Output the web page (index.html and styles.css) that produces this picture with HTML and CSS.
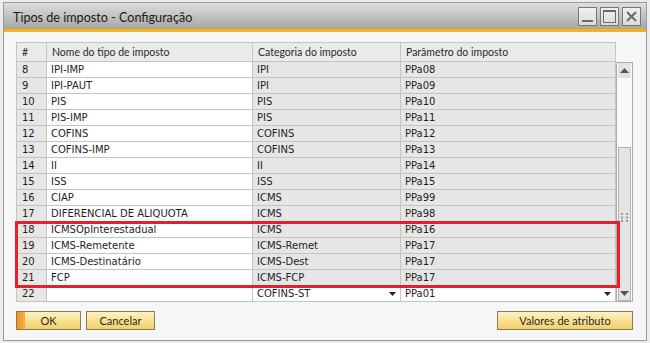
FILE: index.html
```html
<!DOCTYPE html>
<html lang="pt-BR">
<head>
  <meta charset="UTF-8">
  <title>Tipos de imposto - Configuração</title>
  <link rel="stylesheet" href="styles.css">
</head>
<body>
  <div class="window">
    <div class="titlebar">
      <span class="title">Tipos de imposto - Configuração</span>
      <div class="controls">
        <span class="ctl"><svg width="17" height="17" viewBox="0 0 17 17"><rect x="3" y="12" width="11" height="2" fill="#6a6a6a"/></svg></span>
        <span class="ctl"><svg width="17" height="17" viewBox="0 0 17 17"><rect x="2.5" y="2.5" width="12" height="12" fill="none" stroke="#6a6a6a"/><rect x="3" y="3" width="11" height="1" fill="#6a6a6a"/></svg></span>
        <span class="ctl"><svg width="17" height="17" viewBox="0 0 17 17"><path d="M4 4 L13 13 M13 4 L4 13" stroke="#6a6a6a" stroke-width="2"/></svg></span>
      </div>
    </div>

    <div class="content">
      <div class="grid">
        <div class="row head">
          <div class="cell">#</div>
          <div class="cell">Nome do tipo de imposto</div>
          <div class="cell">Categoria do imposto</div>
          <div class="cell">Parâmetro do imposto</div>
        </div>

        <div class="rows">
          <div class="row"><div class="cell num">8</div><div class="cell">IPI-IMP</div><div class="cell ro">IPI</div><div class="cell ro">PPa08</div></div>
          <div class="row"><div class="cell num">9</div><div class="cell">IPI-PAUT</div><div class="cell ro">IPI</div><div class="cell ro">PPa09</div></div>
          <div class="row"><div class="cell num">10</div><div class="cell">PIS</div><div class="cell ro">PIS</div><div class="cell ro">PPa10</div></div>
          <div class="row"><div class="cell num">11</div><div class="cell">PIS-IMP</div><div class="cell ro">PIS</div><div class="cell ro">PPa11</div></div>
          <div class="row"><div class="cell num">12</div><div class="cell">COFINS</div><div class="cell ro">COFINS</div><div class="cell ro">PPa12</div></div>
          <div class="row"><div class="cell num">13</div><div class="cell">COFINS-IMP</div><div class="cell ro">COFINS</div><div class="cell ro">PPa13</div></div>
          <div class="row"><div class="cell num">14</div><div class="cell">II</div><div class="cell ro">II</div><div class="cell ro">PPa14</div></div>
          <div class="row"><div class="cell num">15</div><div class="cell">ISS</div><div class="cell ro">ISS</div><div class="cell ro">PPa15</div></div>
          <div class="row"><div class="cell num">16</div><div class="cell">CIAP</div><div class="cell ro">ICMS</div><div class="cell ro">PPa99</div></div>
          <div class="row"><div class="cell num">17</div><div class="cell">DIFERENCIAL DE ALIQUOTA</div><div class="cell ro">ICMS</div><div class="cell ro">PPa98</div></div>
          <div class="row"><div class="cell num">18</div><div class="cell">ICMSOpInterestadual</div><div class="cell ro">ICMS</div><div class="cell ro">PPa16</div></div>
          <div class="row"><div class="cell num">19</div><div class="cell">ICMS-Remetente</div><div class="cell ro">ICMS-Remet</div><div class="cell ro">PPa17</div></div>
          <div class="row"><div class="cell num">20</div><div class="cell">ICMS-Destinatário</div><div class="cell ro">ICMS-Dest</div><div class="cell ro">PPa17</div></div>
          <div class="row"><div class="cell num">21</div><div class="cell">FCP</div><div class="cell ro">ICMS-FCP</div><div class="cell ro">PPa17</div></div>
          <div class="row">
            <div class="cell num">22</div>
            <div class="cell"></div>
            <div class="cell combo">COFINS-ST<svg width="7" height="4" viewBox="0 0 7 4"><path d="M0 0 H7 L3.5 4 Z" fill="#222"/></svg></div>
            <div class="cell combo">PPa01<svg width="7" height="4" viewBox="0 0 7 4"><path d="M0 0 H7 L3.5 4 Z" fill="#222"/></svg></div>
          </div>
          <div class="highlight"></div>
        </div>

        <div class="scrollbar">
          <div class="sb-btn"><svg width="9" height="5" viewBox="0 0 9 5"><path d="M0 5 H9 L4.5 0 Z" fill="#555"/></svg></div>
          <div class="sb-track"></div>
          <div class="sb-thumb">
            <div class="sb-grip">
              <svg width="7" height="9" viewBox="0 0 7 9" fill="#9a9a9a"><rect x="0" y="0" width="2" height="2"/><rect x="5" y="0" width="2" height="2"/><rect x="0" y="3.5" width="2" height="2"/><rect x="5" y="3.5" width="2" height="2"/><rect x="0" y="7" width="2" height="2"/><rect x="5" y="7" width="2" height="2"/></svg>
            </div>
            <div class="sb-down"><svg width="9" height="5" viewBox="0 0 9 5"><path d="M0 0 H9 L4.5 5 Z" fill="#555"/></svg></div>
          </div>
        </div>
      </div>

      <div class="actions">
        <button class="button default">OK</button>
        <button class="button">Cancelar</button>
        <span class="spacer"></span>
        <button class="button wide">Valores de atributo</button>
      </div>
    </div>
  </div>
</body>
</html>
```

FILE: styles.css
```css
html, body {
  margin: 0;
  padding: 0;
}

body {
  background-color: #ececec;
  padding: 2px 3px 2px 3px;
  font-family: 'DejaVu Sans', sans-serif;
  color: #1e1e1e;
}

.window {
  border: 1px solid #9a9a9a;
  background-color: #f6f6f6;
}

.titlebar {
  height: 26px;
  display: flex;
  align-items: center;
  justify-content: space-between;
  padding: 0 5px 0 9px;
  background: linear-gradient(#dedede, #a6a6a6);
  border-bottom: 3px solid #f6b40c;
}

.title {
  font-family: Lato, sans-serif;
  font-size: 12.6px;
  color: #1a1a1a;
  padding-top: 2px;
}

.controls {
  display: flex;
  gap: 3px;
}

.ctl {
  width: 17px;
  height: 17px;
  border: 1px solid #777;
  background: linear-gradient(#f0f0f0, #dcdcdc);
  display: flex;
}

.content {
  padding: 10px 13px 10px 12px;
}

.grid {
  display: grid;
  grid-template-columns: 600px 17px;
  grid-template-rows: 20px auto;
}

.row {
  display: grid;
  grid-template-columns: 30px 206px 148px 215px;
  border-left: 1px solid #c4c4c4;
  height: 16px;
}

.row.head {
  grid-column: 1;
  height: 19px;
  border-top: 1px solid #c4c4c4;
  background-color: #eaeaea;
  font-family: Lato, sans-serif;
  color: #2b2b2b;
}

.cell {
  border-right: 1px solid #c4c4c4;
  border-bottom: 1px solid #c4c4c4;
  padding-left: 4px;
  font-size: 10px;
  line-height: 15px;
  white-space: nowrap;
  overflow: hidden;
  background-color: #fff;
}

.head .cell {
  background-color: #eaeaea;
  font-size: 10.5px;
  line-height: 19px;
  padding-left: 5px;
}

.cell.num {
  background-color: #e6e6e6;
  padding-left: 5px;
}

.cell.ro {
  background-color: #e6e6e6;
}

.cell.combo {
  display: flex;
  align-items: center;
  justify-content: space-between;
  padding-right: 4px;
}

.rows {
  grid-column: 1;
  grid-row: 2;
  position: relative;
}

.highlight {
  position: absolute;
  left: -1px;
  top: 159px;
  width: 599px;
  height: 61px;
  border: 3px solid #e3202b;
}

.scrollbar {
  grid-column: 2;
  grid-row: 2;
  border: 1px solid #adadad;
  background-color: #f9f9f9;
  display: flex;
  flex-direction: column;
  padding: 0 1px;
}

.sb-btn {
  height: 15px;
  background-color: #e3e3e3;
  display: flex;
  align-items: center;
  justify-content: center;
}

.sb-track {
  flex: 1;
}

.sb-thumb {
  height: 152px;
  border: 1px solid #b4b4b4;
  background-color: #e4e4e4;
  display: flex;
  flex-direction: column;
}

.sb-grip {
  flex: 1;
  display: flex;
  align-items: center;
  justify-content: center;
}

.sb-down {
  height: 13px;
  display: flex;
  align-items: center;
  justify-content: center;
}

.actions {
  display: flex;
  gap: 5px;
  margin-top: 9px;
  width: 617px;
}

.spacer {
  flex: 1;
}

.button {
  height: 19px;
  padding: 0;
  border: 1px solid #857a5e;
  background: linear-gradient(#fdf2c6, #f4d064);
  font-family: Lato, sans-serif;
  font-size: 11px;
  color: #2a2a2a;
  width: 65px;
}

.button + .button {
  width: 69px;
}

.button.wide {
  width: 136px;
}

.button.default {
  background:
    linear-gradient(90deg, #ef951a 0, #f4b040 8px, transparent 8px),
    linear-gradient(#fdf2c6, #f4d064);
}
```
